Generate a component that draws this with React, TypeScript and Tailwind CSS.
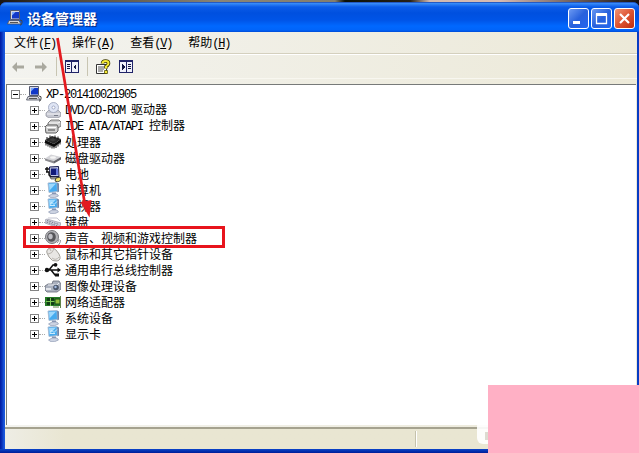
import React from 'react';

type IconName =
  | 'computer'
  | 'disc'
  | 'ide'
  | 'chip'
  | 'drive'
  | 'battery'
  | 'monitor'
  | 'display'
  | 'keyboard'
  | 'speaker'
  | 'mouse'
  | 'usb'
  | 'camera'
  | 'network';

const MENUS = [
  { label: '文件', hotkey: 'F' },
  { label: '操作', hotkey: 'A' },
  { label: '查看', hotkey: 'V' },
  { label: '帮助', hotkey: 'H' },
];

const DEVICES: Array<{ icon: IconName; latin?: string; label: string }> = [
  { icon: 'disc', latin: 'DVD/CD-ROM ', label: '驱动器' },
  { icon: 'ide', latin: 'IDE ATA/ATAPI ', label: '控制器' },
  { icon: 'chip', label: '处理器' },
  { icon: 'drive', label: '磁盘驱动器' },
  { icon: 'battery', label: '电池' },
  { icon: 'monitor', label: '计算机' },
  { icon: 'display', label: '监视器' },
  { icon: 'keyboard', label: '键盘' },
  { icon: 'speaker', label: '声音、视频和游戏控制器' },
  { icon: 'mouse', label: '鼠标和其它指针设备' },
  { icon: 'usb', label: '通用串行总线控制器' },
  { icon: 'camera', label: '图像处理设备' },
  { icon: 'network', label: '网络适配器' },
  { icon: 'monitor', label: '系统设备' },
  { icon: 'display', label: '显示卡' },
];

const monitorShape = (
  <>
    <path d="M3 1l9-.5.500 9L4 10.500z" fill="#46abef" stroke="#a9bbd2" strokeWidth=".9" />
    <path d="M4 2l7-.5-6.500 7z" fill="#9fd9fd" />
    <path d="M12 .5l2 1v8l-1.500 1z" fill="#6f87ab" />
    <path d="M7 10.500h4V13H7z" fill="#8494b4" />
    <path d="M3.500 14l3.500-2h5l1.500 2-4 1.700H6z" fill="#ccd3e2" stroke="#8e9ab3" strokeWidth=".7" />
  </>
);

const ICONS: Record<IconName, React.ReactNode> = {
  computer: (
    <>
      <path d="M3.500 .5h9v9h-9z" fill="#d3d6e2" stroke="#555b70" />
      <path d="M5 2h7v6.500H5z" fill="#1238c8" />
      <path d="M5 2h3.500L5 5.500z" fill="#78a8ff" />
      <path d="M2 10.500h10l2 3.500H.5z" fill="#d5d5da" stroke="#4c5060" strokeWidth=".8" />
      <path d="M3 12.500h8" stroke="#555" />
      <path d="M13 10q3 0 2 3t-2 2" fill="none" stroke="#444" />
    </>
  ),
  disc: (
    <>
      <path d="M1 11l3-3h9l3 3v3l-3 2H4l-3-2z" fill="#c5c7d0" stroke="#8b8e9a" strokeWidth=".7" />
      <path d="M2 12h13" stroke="#f5f5fa" />
      <ellipse cx="8.500" cy="5.500" rx="5" ry="5" fill="#dfe5f4" stroke="#98a0b8" strokeWidth=".8" />
      <circle cx="8.500" cy="5.500" r="1.500" fill="#fff" stroke="#8994b5" strokeWidth=".7" />
      <path d="M9 13.500h4" stroke="#777b88" />
    </>
  ),
  ide: (
    <>
      <path d="M3 5l3-3h8l2 2v4l-3 2H3z" fill="#c8c8c8" stroke="#707070" strokeWidth=".9" />
      <path d="M4 5h9l2-1" fill="none" stroke="#fff" />
      <path d="M0 9l2-2h10l1 2v4l-2 2H1z" fill="#d0d0d0" stroke="#606060" strokeWidth="1" />
      <path d="M2 9.500h9" stroke="#fff" />
      <path d="M3 12h7" stroke="#444" />
    </>
  ),
  chip: (
    <>
      <path d="M0 6l7-4 9 3-7 5z" fill="#2a2a2a" />
      <path d="M4 6l4-2 3 2-3 1.500z" fill="#3d3d3d" />
      <path d="M0 6v3l9 4 7-5V5l-7 5z" fill="#0b0b0b" />
      <path
        d="M1 8v3.500M3 9v3.500M5 10v3.500M7 11v3.500M9 12v2.500M11 10v4M13 9v3.500M15 7v3.500M2 3v2M5 1.500v2M10 1.500v3M13 2.500v3"
        stroke="#111"
      />
    </>
  ),
  drive: (
    <>
      <path d="M0 8.500l6-4 10 2.500-7 4z" fill="#d4d4d8" />
      <path d="M0 8.500v2l9 3V11z" fill="#8b8b90" />
      <path d="M9 11v2.500l7-4V7z" fill="#66666d" />
      <ellipse cx="8" cy="7.500" rx="3" ry="1.200" fill="#f5f5f5" />
    </>
  ),
  battery: (
    <>
      <path d="M4.500 1l9-.5.500 10H5z" fill="#c3c8e4" stroke="#171b50" />
      <path d="M6 2.500h6V9H6z" fill="#111a79" />
      <path d="M11 2l2 1v6h-2z" fill="#6577dc" />
      <path d="M2 1v5M0 3h4M1 6h3v3l3 3h4" fill="none" stroke="#111" strokeWidth="1.400" />
      <path d="M5 11h8l2 2H6z" fill="#aaa" stroke="#333" strokeWidth=".6" />
      <path d="M11 12l4-1 1 3-3 2-3-1z" fill="#f0df6d" stroke="#222" strokeWidth=".8" />
    </>
  ),
  monitor: monitorShape,
  display: (
    <>
      {monitorShape}
      <path d="M5 5.500l2-1 2 2 3-3M5 7.500h5" fill="none" stroke="#d9f2ff" strokeWidth=".9" />
    </>
  ),
  keyboard: (
    <>
      <path d="M0 6l2-1 14 4-1 3-4 1L0 9z" fill="#cfd0dc" stroke="#9799a8" strokeWidth=".7" />
      <path d="M2 6.500l12 4M1.500 8l11 4" stroke="#747786" strokeDasharray="1.500 1" />
      <path d="M3 4h9l3 3" fill="none" stroke="#c4c6d2" />
    </>
  ),
  speaker: (
    <>
      <ellipse cx="7" cy="7" rx="6.500" ry="6.500" fill="#b4b4b8" stroke="#77777c" />
      <ellipse cx="6.500" cy="7" rx="4.300" ry="4.800" fill="#55555a" />
      <ellipse cx="5.500" cy="6.500" rx="2.200" ry="2.700" fill="#bfbfc5" />
      <path d="M12 13q2-2 2-4M13.500 15q2-2 2-5" fill="none" stroke="#85858c" strokeWidth=".9" />
    </>
  ),
  mouse: (
    <>
      <path d="M3 3q4-3 8 1l3 4q3 6-2 7-5 1-8-4L2 7q-1-2 1-4z" fill="#e8e6e4" stroke="#9b9791" strokeWidth=".9" />
      <path d="M3 8q4 0 6-5M6 5L4 1" fill="none" stroke="#aaa59e" strokeWidth=".8" />
      <path d="M7 12q4 3 7-1" fill="none" stroke="#bcb8b3" />
    </>
  ),
  usb: (
    <>
      <path d="M1 8h14M4 8l4-5h2M6 8l4 5h2" fill="none" stroke="#111" strokeWidth="1.500" />
      <circle cx="2" cy="8" r="2.200" fill="#111" />
      <circle cx="10.500" cy="2.800" r="1.900" fill="#111" />
      <path d="M10 11.500h4v3h-4zM12.500 5.500L16 8l-3.500 2.500z" fill="#111" />
    </>
  ),
  camera: (
    <>
      <path d="M0 8l3-2h4l1-3h6l2 3v5l-4 3H2l-2-2z" fill="#acb2bf" stroke="#646b79" strokeWidth=".8" />
      <path d="M3 7h9l2-2" fill="none" stroke="#eceef5" />
      <circle cx="11" cy="9.500" r="2.800" fill="#4d586c" />
      <circle cx="10.500" cy="9" r="1.200" fill="#a6bde4" />
      <path d="M1 10h5v2H1z" fill="#e3e5ea" />
    </>
  ),
  network: (
    <>
      <path d="M0 3h15v9H0z" fill="#267a27" />
      <path d="M2 4h3v3H2zM6 4h3v3H6zM2 8h3v3H2zM6 8h3v3H6z" fill="#123d15" />
      <path d="M1 7.500h9M5.500 4v8" stroke="#7dca54" />
      <path d="M10 5h5v5h-5z" fill="#8fbd38" stroke="#154a17" />
      <path d="M15.500 2v12M8 13h6" stroke="#628449" />
    </>
  ),
};

function Icon({ name }: { name: IconName }) {
  return (
    <svg viewBox="0 0 16 16" className="h-4 w-4 shrink-0">
      {ICONS[name]}
    </svg>
  );
}

function Latin({ children }: { children: React.ReactNode }) {
  return (
    <span className="font-['Liberation_Mono',monospace] text-[12px] tracking-[-1.2px] whitespace-pre">
      {children}
    </span>
  );
}

function Expander({ open = false }: { open?: boolean }) {
  return (
    <>
      <svg viewBox="0 0 9 9" className="h-[9px] w-[9px] shrink-0" shapeRendering="crispEdges">
        <path d="M.5 .5h8v8h-8z" fill="#fff" stroke="#848484" />
        <path d={open ? 'M2 4.500h5' : 'M2 4.500h5M4.500 2v5'} stroke="#000" />
      </svg>
      <span className="w-1.5 shrink-0 border-t border-dotted border-[#aaa]" />
    </>
  );
}

function PaneIcon({ flipped = false }: { flipped?: boolean }) {
  return (
    <svg viewBox="0 0 14 13" className="h-[13px] w-3.5" shapeRendering="crispEdges">
      <path d="M0 0h14v13H0z" fill="#202468" />
      {flipped ? (
        <>
          <path d="M1 2h6v10H1zM8 2h5v10H8z" fill="#f0f1fb" />
          <path d="M3 4l3 3-3 3zM9 4h3v1H9zM9 6h3v1H9zM9 8h3v1H9z" fill="#111642" />
        </>
      ) : (
        <>
          <path d="M1 2h5v10H1zM7 2h6v10H7z" fill="#f0f1fb" />
          <path d="M2 4h3v1H2zM2 6h3v1H2zM2 8h3v1H2zM11 4L8 7l3 3z" fill="#111642" />
        </>
      )}
    </svg>
  );
}

function ToolArrow({ forward = false }: { forward?: boolean }) {
  return (
    <svg viewBox="0 0 12 10" className="h-2.5 w-3">
      <path
        d={forward ? 'M12 5L7 0v3.500H0v3h7V10z' : 'M0 5l5-5v3.500h7v3H5V10z'}
        fill="#aaa99f"
      />
    </svg>
  );
}

function CaptionButton({ kind }: { kind: 'min' | 'max' | 'close' }) {
  return (
    <button
      type="button"
      className={
        'flex h-[21px] w-[21px] items-center justify-center rounded-[3px] border border-white ' +
        (kind === 'close'
          ? 'bg-linear-to-br from-[#ee9274] via-[#de5431] to-[#bd2d0b]'
          : 'bg-linear-to-br from-[#6c99f2] via-[#2861dc] to-[#2366ef]')
      }
    >
      <svg viewBox="0 0 19 19" className="h-[19px] w-[19px] shrink-0" fill="none" stroke="#fff">
        {kind === 'min' && <path d="M4 13.500h7" strokeWidth="3" />}
        {kind === 'max' && (
          <>
            <path d="M4.500 5.500h10v9h-10z" strokeWidth="1.300" />
            <path d="M4 5.500h11" strokeWidth="3" />
          </>
        )}
        {kind === 'close' && <path d="M5 5l9 9M14 5l-9 9" strokeWidth="2.200" />}
      </svg>
    </button>
  );
}

function TitleBar() {
  return (
    <div className="flex h-[30px] shrink-0 items-center rounded-t-[6px] border-t border-[#245ac5] bg-[linear-gradient(#3c91fb_0,#0b5be8_4px,#0050df_10px,#0054e7_17px,#0068ff_23px,#0064fa_27px,#003fc4_30px)] pr-[4px] pl-[7px]">
      <Icon name="computer" />
      <h1 className="ml-1 flex-1 text-[14px] leading-5 font-bold text-white [text-shadow:1px_1px_1px_#00247c]">
        设备管理器
      </h1>
      <div className="flex gap-0.5 pt-0.5">
        <CaptionButton kind="min" />
        <CaptionButton kind="max" />
        <CaptionButton kind="close" />
      </div>
    </div>
  );
}

function Toolbar() {
  return (
    <div className="flex h-[25px] shrink-0 items-center border-t border-b border-t-white border-b-[#f8f7f0] pl-[7px]">
      <ToolArrow />
      <span className="w-[11px]" />
      <ToolArrow forward />
      <span className="mr-2 ml-[9px] h-[19px] w-px bg-[#c8c5b2]" />
      <PaneIcon />
      <span className="mx-2 h-[19px] w-px bg-[#c8c5b2]" />
      <svg viewBox="0 0 15 16" className="h-4 w-[15px]">
        <path d="M.5 5.500h10v9H.5z" fill="#fff" stroke="#333" />
        <path d="M2 8h6M2 10h6M2 12h5" stroke="#555" />
        <path
          d="M6.500 4.500q0-2.500 3-2.500 3 0 3 2.200 0 1.800-2.500 3.300v2"
          fill="none"
          stroke="#403c00"
          strokeWidth="3.600"
        />
        <path
          d="M6.500 4.500q0-2.500 3-2.500 3 0 3 2.200 0 1.800-2.500 3.300v2"
          fill="none"
          stroke="#f5ea33"
          strokeWidth="2"
        />
        <path d="M8.500 11.500h3v3h-3z" fill="#f5ea33" stroke="#403c00" strokeWidth=".7" />
      </svg>
      <span className="w-2" />
      <PaneIcon flipped />
    </div>
  );
}

function DeviceTree() {
  return (
    <div className="mx-px mt-[5px] h-[341px] shrink-0 border-t border-l border-[#777a79] bg-white pt-px">
      <div className="flex h-4 items-center pl-1">
        <Expander open />
        <Icon name="computer" />
        <span className="ml-1">
          <Latin>XP-201410021905</Latin>
        </span>
      </div>
      <ul>
        {DEVICES.map((d) => (
          <li key={d.label} className="flex h-4 items-center pl-[23px]">
            <Expander />
            <Icon name={d.icon} />
            <span className="ml-1 whitespace-nowrap">
              {d.latin && <Latin>{d.latin}</Latin>}
              {d.label}
            </span>
          </li>
        ))}
      </ul>
    </div>
  );
}

export default function App() {
  return (
    <div className="relative h-[453px] w-[639px] overflow-hidden bg-[linear-gradient(90deg,#181412_0,#484034_60px,#8b8576_220px,#857e6c_335px,#0c1108_345px,#272015_410px,#d3b9af_430px,#d7bab1_500px,#151112_639px)] pt-0.5 font-['Noto_Sans_CJK_SC',sans-serif] text-[12px] leading-4 text-black">
      <div className="flex h-[451px] flex-col rounded-t-[6px] bg-[#073bc4]">
        <TitleBar />
        <div className="mr-0.5 flex h-[417px] flex-col border-l-[5px] border-[#0b42c5] bg-linear-to-r from-[#f3f3ef] to-[#ece9d8] shadow-[inset_1px_0_0_#f8f8f0]">
          <nav className="flex h-[22px] shrink-0 items-center gap-4 border-b border-[#d4d0be] pt-px pl-[9px]">
            {MENUS.map((m) => (
              <span key={m.hotkey} className="whitespace-nowrap">
                {m.label}
                <Latin>
                  (<u className="underline-offset-1">{m.hotkey}</u>)
                </Latin>
              </span>
            ))}
          </nav>
          <Toolbar />
          <DeviceTree />
          <footer className="mt-0.5 flex flex-1 border-t-2 border-[#a5a28f] bg-linear-to-r from-[#eeede5] to-[#e9e6d2] to-[60px] pt-0.5 pb-0.5">
            <span className="w-[411px] border-r border-[#c5c2ac]" />
            <span className="w-px bg-white" />
          </footer>
        </div>
        <div className="flex-1 bg-linear-to-b from-[#0c45cb] to-[#001c97]" />
      </div>

      {/* Sheen on the left window frame */}
      <div className="absolute top-8 bottom-1 left-0 w-[5px] bg-[linear-gradient(90deg,#0019a0_0,#0832b9_2px,#1c58dc_4px,#1755db_5px)]" />

      {/* Callout marking the sound controllers row */}
      <div className="absolute top-[226px] left-[23px] h-[22px] w-[202px] border-[3px] border-[#e8141c]" />
      <svg viewBox="0 0 639 453" className="pointer-events-none absolute inset-0 h-[453px] w-[639px]">
        <path d="M57.500 38L85 205" stroke="#e31b20" strokeWidth="2.700" />
        <path d="M80.500 202l11-2-2 17.500z" fill="#e31b20" />
      </svg>

      {/* Faded stamp edge beside the pink block */}
      <div className="absolute top-[420px] left-[477px] h-6 w-3 rounded-l-md bg-white/90">
        <div className="mt-3 ml-2 h-2 w-[3px] bg-[#dddbd0]" />
      </div>
      <div className="absolute right-0 bottom-0 h-[68px] w-[151px] bg-[#ffb0c5]" />
    </div>
  );
}
